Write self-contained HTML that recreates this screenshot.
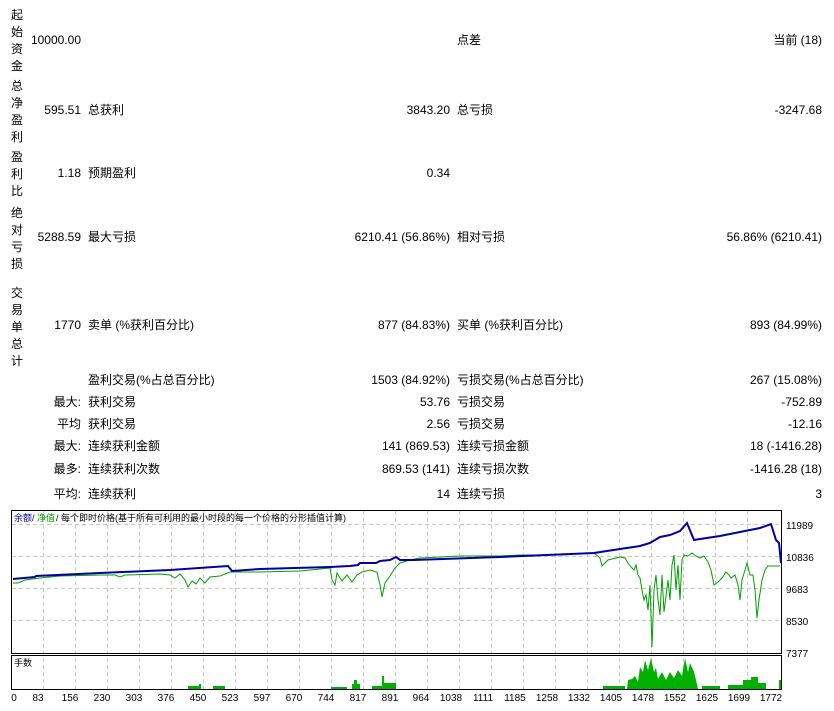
<!DOCTYPE html>
<html><head><meta charset="utf-8"><style>
body{margin:0;width:834px;height:711px;background:#fff;font-family:"Liberation Sans","Noto Sans CJK SC",sans-serif;font-size:12px;color:#000;position:relative;overflow:hidden}
.a{position:absolute;white-space:nowrap;line-height:14px}
.r{text-align:right}
.v{position:absolute;left:10px;width:14px;line-height:17px;text-align:center}
</style></head><body>
<div class="v" style="top:7px">起<br>始<br>资<br>金</div>
<div class="v" style="top:78px">总<br>净<br>盈<br>利</div>
<div class="v" style="top:149px">盈<br>利<br>比</div>
<div class="v" style="top:205px">绝<br>对<br>亏<br>损</div>
<div class="v" style="top:285px">交<br>易<br>单<br>总<br>计</div>

<div class="a r" style="right:753px;top:33px">10000.00</div>
<div class="a" style="left:457px;top:33px">点差</div>
<div class="a r" style="right:12px;top:33px">当前 (18)</div>

<div class="a r" style="right:753px;top:103px">595.51</div>
<div class="a" style="left:88px;top:103px">总获利</div>
<div class="a r" style="right:384px;top:103px">3843.20</div>
<div class="a" style="left:457px;top:103px">总亏损</div>
<div class="a r" style="right:12px;top:103px">-3247.68</div>

<div class="a r" style="right:753px;top:166px">1.18</div>
<div class="a" style="left:88px;top:166px">预期盈利</div>
<div class="a r" style="right:384px;top:166px">0.34</div>

<div class="a r" style="right:753px;top:230px">5288.59</div>
<div class="a" style="left:88px;top:230px">最大亏损</div>
<div class="a r" style="right:384px;top:230px">6210.41 (56.86%)</div>
<div class="a" style="left:457px;top:230px">相对亏损</div>
<div class="a r" style="right:12px;top:230px">56.86% (6210.41)</div>

<div class="a r" style="right:753px;top:318px">1770</div>
<div class="a" style="left:88px;top:318px">卖单 (%获利百分比)</div>
<div class="a r" style="right:384px;top:318px">877 (84.83%)</div>
<div class="a" style="left:457px;top:318px">买单 (%获利百分比)</div>
<div class="a r" style="right:12px;top:318px">893 (84.99%)</div>

<div class="a" style="left:88px;top:373px">盈利交易(%占总百分比)</div>
<div class="a r" style="right:384px;top:373px">1503 (84.92%)</div>
<div class="a" style="left:457px;top:373px">亏损交易(%占总百分比)</div>
<div class="a r" style="right:12px;top:373px">267 (15.08%)</div>

<div class="a r" style="right:753px;top:395px">最大:</div>
<div class="a" style="left:88px;top:395px">获利交易</div>
<div class="a r" style="right:384px;top:395px">53.76</div>
<div class="a" style="left:457px;top:395px">亏损交易</div>
<div class="a r" style="right:12px;top:395px">-752.89</div>

<div class="a r" style="right:753px;top:417px">平均</div>
<div class="a" style="left:88px;top:417px">获利交易</div>
<div class="a r" style="right:384px;top:417px">2.56</div>
<div class="a" style="left:457px;top:417px">亏损交易</div>
<div class="a r" style="right:12px;top:417px">-12.16</div>

<div class="a r" style="right:753px;top:439px">最大:</div>
<div class="a" style="left:88px;top:439px">连续获利金额</div>
<div class="a r" style="right:384px;top:439px">141 (869.53)</div>
<div class="a" style="left:457px;top:439px">连续亏损金额</div>
<div class="a r" style="right:12px;top:439px">18 (-1416.28)</div>

<div class="a r" style="right:753px;top:462px">最多:</div>
<div class="a" style="left:88px;top:462px">连续获利次数</div>
<div class="a r" style="right:384px;top:462px">869.53 (141)</div>
<div class="a" style="left:457px;top:462px">连续亏损次数</div>
<div class="a r" style="right:12px;top:462px">-1416.28 (18)</div>

<div class="a r" style="right:753px;top:487px">平均:</div>
<div class="a" style="left:88px;top:487px">连续获利</div>
<div class="a r" style="right:384px;top:487px">14</div>
<div class="a" style="left:457px;top:487px">连续亏损</div>
<div class="a r" style="right:12px;top:487px">3</div>

<svg style="position:absolute;left:0;top:0" width="834" height="711">
<g stroke="#c8c8c8" stroke-dasharray="4,3" stroke-width="1">
<line x1="12" y1="524.5" x2="782" y2="524.5"/><line x1="12" y1="556.5" x2="782" y2="556.5"/><line x1="12" y1="588.5" x2="782" y2="588.5"/><line x1="12" y1="620.5" x2="782" y2="620.5"/>
<g id="vg">
<line x1="43.5" y1="511" x2="43.5" y2="689"/><line x1="75.5" y1="511" x2="75.5" y2="689"/><line x1="107.5" y1="511" x2="107.5" y2="689"/><line x1="139.5" y1="511" x2="139.5" y2="689"/><line x1="171.5" y1="511" x2="171.5" y2="689"/><line x1="203.5" y1="511" x2="203.5" y2="689"/><line x1="235.5" y1="511" x2="235.5" y2="689"/><line x1="267.5" y1="511" x2="267.5" y2="689"/><line x1="299.5" y1="511" x2="299.5" y2="689"/><line x1="331.5" y1="511" x2="331.5" y2="689"/><line x1="363.5" y1="511" x2="363.5" y2="689"/><line x1="395.5" y1="511" x2="395.5" y2="689"/><line x1="427.5" y1="511" x2="427.5" y2="689"/><line x1="459.5" y1="511" x2="459.5" y2="689"/><line x1="491.5" y1="511" x2="491.5" y2="689"/><line x1="523.5" y1="511" x2="523.5" y2="689"/><line x1="555.5" y1="511" x2="555.5" y2="689"/><line x1="587.5" y1="511" x2="587.5" y2="689"/><line x1="619.5" y1="511" x2="619.5" y2="689"/><line x1="651.5" y1="511" x2="651.5" y2="689"/><line x1="683.5" y1="511" x2="683.5" y2="689"/><line x1="715.5" y1="511" x2="715.5" y2="689"/><line x1="747.5" y1="511" x2="747.5" y2="689"/>
</g></g>
<rect x="11.5" y="510.5" width="770" height="143" fill="none" stroke="#000"/>
<rect x="11.5" y="655.5" width="770" height="34" fill="none" stroke="#000"/>
<polyline fill="none" stroke="#00a000" stroke-width="1" points="13,583 18,583 25,580 40,578 60,576 100,575 115,575 120,577 125,575 160,574 170,575 175,578 180,574 185,580 188,587 192,581 196,584 200,578 205,583 210,577 220,576 230,572 240,572 260,572 300,571 320,569 330,568 332,580 335,585 337,573 342,581 347,575 352,582 357,575 362,572 370,570 377,572 380,585 382,597 385,583 390,576 395,568 400,563 410,560 420,558 440,557 460,556 480,556 500,556 520,555 560,555 594,553 600,558 602,566 608,560 616,558 620,557 625,558 628,563 632,568 634,570 636,565 638,575 640,578 642,590 644,600 646,595 648,610 650,585 652,647 654,590 656,575 658,600 660,615 662,575 664,612 666,596 668,580 670,600 672,565 674,555 676,590 678,565 680,600 682,560 684,555 688,556 692,553 696,556 700,558 704,556 708,562 711,570 714,585 718,582 722,578 726,572 729,575 731,578 735,575 738,585 740,600 742,580 745,570 747,563 750,575 753,575 755,590 757,618 759,600 762,580 765,570 768,566 780,566"/>
<polyline fill="none" stroke="#0000a0" stroke-width="2" points="13,579 35,577 36,576 100,573 170,570 228,566 232,571 260,569 330,567 350,566 358,565 360,563 376,563 380,561 390,560 396,557 400,560 414,560 500,557 594,553 620,549 640,546 650,543 655,540 660,537 670,535 680,531 687,523 694,540 700,539 720,536 740,532 760,528 771,524 776,540 779,543 781,563"/>
<g fill="#00b000">
<rect x="188" y="686" width="12" height="3"/><rect x="199" y="684" width="2" height="5"/><rect x="213" y="686" width="12" height="3"/><rect x="331" y="687" width="16" height="2"/><rect x="352" y="684" width="8" height="5"/><rect x="354" y="680" width="3" height="9"/><rect x="372" y="686" width="10" height="3"/><rect x="382" y="676" width="2" height="13"/><rect x="384" y="683" width="12" height="6"/>
<rect x="603" y="686" width="22" height="3"/>
<polygon points="627,689 628,680 632,679 635,676 638,682 640,667 643,672 645,660 648,670 651,658 654,672 656,668 658,679 662,672 666,680 670,672 674,678 678,670 682,676 685,658 688,672 690,663 694,672 696,680 698,689"/>
<rect x="702" y="686" width="18" height="3"/><rect x="728" y="685" width="15" height="4"/><rect x="743" y="680" width="8" height="9"/><rect x="751" y="677" width="7" height="12"/><rect x="758" y="683" width="8" height="6"/><rect x="779" y="680" width="2" height="9"/>
</g>
<text x="14" y="521" font-size="9" fill="#0000a0" font-family="Liberation Sans,Noto Sans CJK SC,sans-serif">余额</text>
<text x="32" y="521" font-size="9" fill="#000" font-family="Liberation Sans,Noto Sans CJK SC,sans-serif">/</text>
<text x="37" y="521" font-size="9" fill="#00a000" font-family="Liberation Sans,Noto Sans CJK SC,sans-serif">净值</text>
<text x="56" y="521" font-size="9" fill="#000" font-family="Liberation Sans,Noto Sans CJK SC,sans-serif">/ 每个即时价格(基于所有可利用的最小时段的每一个价格的分形插值计算)</text>
<text x="14" y="666" font-size="9" fill="#000" font-family="Liberation Sans,Noto Sans CJK SC,sans-serif">手数</text>
<g font-size="10" fill="#000" font-family="Liberation Sans,sans-serif">
<text x="786" y="529">11989</text><text x="786" y="561">10836</text><text x="786" y="593">9683</text><text x="786" y="625">8530</text><text x="786" y="657">7377</text>
</g>
<g font-size="10" fill="#000" font-family="Liberation Sans,sans-serif" text-anchor="middle">
<text x="14" y="701">0</text><text x="38" y="701">83</text><text x="70" y="701">156</text><text x="102" y="701">230</text><text x="134" y="701">303</text><text x="166" y="701">376</text><text x="198" y="701">450</text><text x="230" y="701">523</text><text x="262" y="701">597</text><text x="294" y="701">670</text><text x="326" y="701">744</text><text x="358" y="701">817</text><text x="390" y="701">891</text><text x="421" y="701">964</text><text x="451" y="701">1038</text><text x="483" y="701">1111</text><text x="515" y="701">1185</text><text x="547" y="701">1258</text><text x="579" y="701">1332</text><text x="611" y="701">1405</text><text x="643" y="701">1478</text><text x="675" y="701">1552</text><text x="707" y="701">1625</text><text x="739" y="701">1699</text><text x="771" y="701">1772</text>
</g>
</svg>
</body></html>
